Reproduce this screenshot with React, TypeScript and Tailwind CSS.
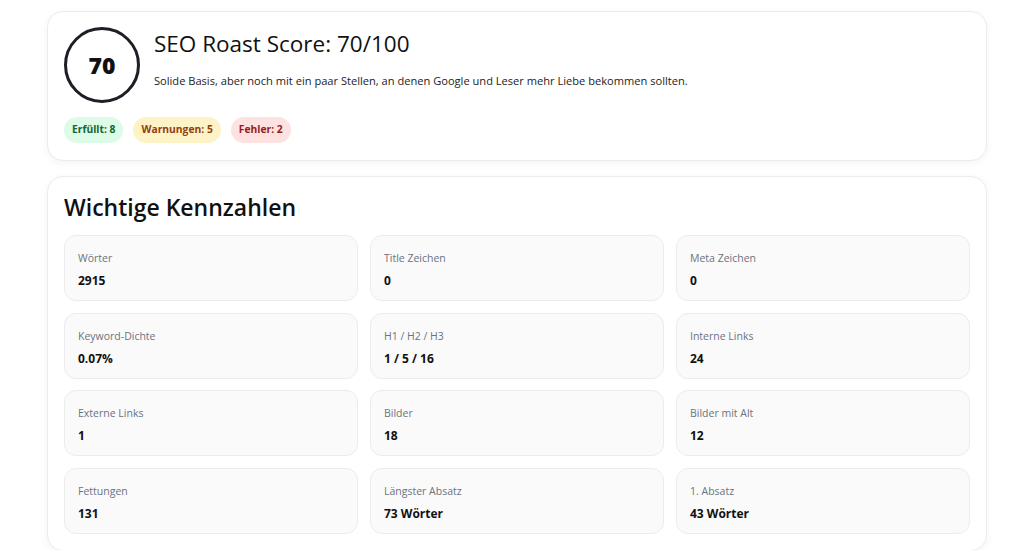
import React from 'react';

const metrics = [
  { label: 'Wörter', value: '2915' },
  { label: 'Title Zeichen', value: '0' },
  { label: 'Meta Zeichen', value: '0' },
  { label: 'Keyword-Dichte', value: '0.07%' },
  { label: 'H1 / H2 / H3', value: '1 / 5 / 16' },
  { label: 'Interne Links', value: '24' },
  { label: 'Externe Links', value: '1' },
  { label: 'Bilder', value: '18' },
  { label: 'Bilder mit Alt', value: '12' },
  { label: 'Fettungen', value: '131' },
  { label: 'Längster Absatz', value: '73 Wörter' },
  { label: '1. Absatz', value: '43 Wörter' },
];

const App: React.FC = () => {
  return (
    <div
      className="min-h-screen bg-white text-[#111] pt-[11px] pl-[47px]"
      style={{ fontFamily: '"Open Sans", "Noto Sans", Arial, sans-serif' }}
    >
      <div className="w-[940px] flex flex-col gap-[15px]">
        {/* Score card */}
        <div className="rounded-[16px] border border-[#ececec] bg-white px-4 pt-[15px] pb-[17px] shadow-[0_2px_8px_rgba(0,0,0,0.05)]">
          <div className="flex items-start gap-[14px]">
            <div className="w-[76px] h-[76px] shrink-0 rounded-full border-[3px] border-[#1c1f26] flex items-center justify-center">
              <span className="text-[23px] font-extrabold leading-none">70</span>
            </div>
            <div className="pt-[1px]">
              <h2 className="text-[22.5px] leading-[32px] font-normal">SEO Roast Score: 70/100</h2>
              <p className="mt-[12px] text-[11.1px] leading-[18px] text-[#222]">
                Solide Basis, aber noch mit ein paar Stellen, an denen Google und Leser mehr Liebe bekommen sollten.
              </p>
            </div>
          </div>
          <div className="mt-[14px] flex gap-[10px]">
            <span className="h-[26px] px-[8px] rounded-full bg-[#dcfce7] text-[#166534] text-[10.3px] font-bold flex items-center">Erfüllt: 8</span>
            <span className="h-[26px] px-[8px] rounded-full bg-[#fef3c7] text-[#92400e] text-[10.3px] font-bold flex items-center">Warnungen: 5</span>
            <span className="h-[26px] px-[8px] rounded-full bg-[#fee2e2] text-[#991b1b] text-[10.3px] font-bold flex items-center">Fehler: 2</span>
          </div>
        </div>

        {/* Kennzahlen */}
        <div className="rounded-[16px] border border-[#ececec] bg-white px-4 pt-[14px] pb-4 shadow-[0_2px_8px_rgba(0,0,0,0.05)]">
          <h3 className="text-[23px] leading-[32px] font-semibold mb-[12px]">Wichtige Kennzahlen</h3>
          <div className="grid grid-cols-3 gap-x-[12px] gap-y-[11.5px]">
            {metrics.map((m) => (
              <div key={m.label} className="h-[66px] rounded-[12px] border border-[#ececec] bg-[#fafafa] px-[13px] pt-[14px]">
                <div className="text-[10.5px] leading-[16px] text-[#6b7280]">{m.label}</div>
                <div className="mt-[6px] text-[12px] leading-[18px] font-bold text-[#111]">{m.value}</div>
              </div>
            ))}
          </div>
        </div>
      </div>
    </div>
  );
};

export default App;
